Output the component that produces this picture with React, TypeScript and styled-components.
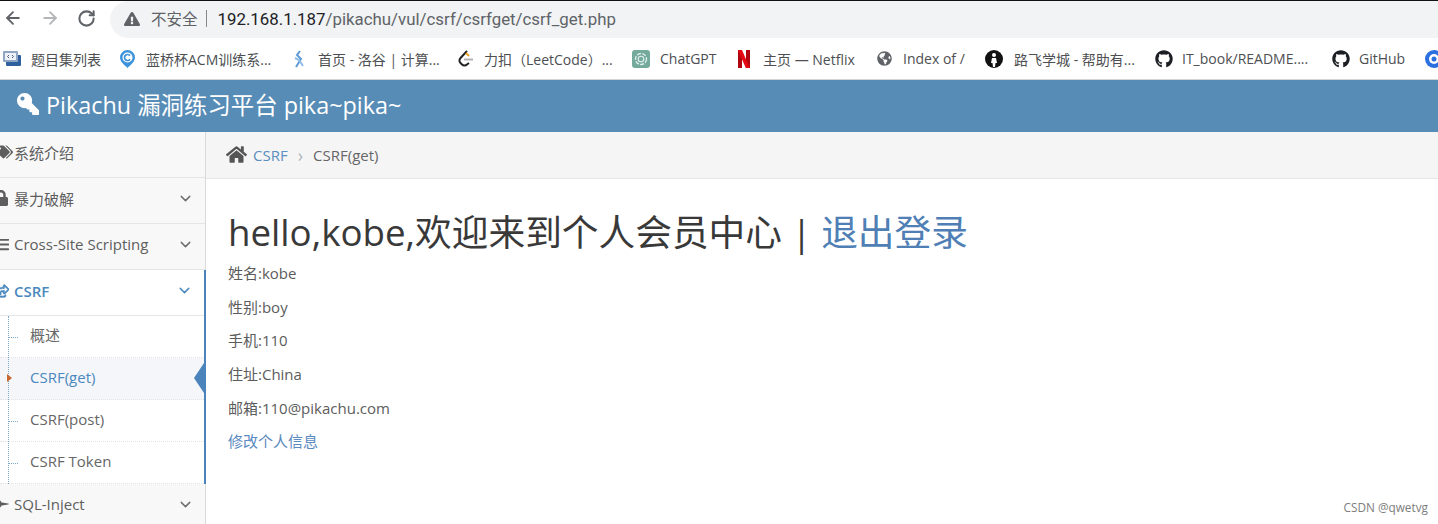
import React, { FC } from 'react'
import styled, { createGlobalStyle } from 'styled-components'
import { ArrowLeft, ArrowRight, RotateCw, ChevronDown } from 'lucide-react'
import {
  FaExclamationTriangle,
  FaFighterJet,
  FaGithub,
  FaGlobeAmericas,
  FaHome,
  FaKey,
  FaListOl,
  FaLock,
  FaRegShareSquare,
  FaTags,
} from 'react-icons/fa'

const GlobalStyle = createGlobalStyle`
  html, body {
    margin: 0;
    padding: 0;
    background: #fff;
  }
  body {
    font-family: "Open Sans", "Noto Sans CJK SC", sans-serif;
    overflow: hidden;
  }
`

function GlobeIcon() {
  return <FaGlobeAmericas size={15} color="#5f6368" />
}

function GithubIcon() {
  return <FaGithub size={18} color="#1b1f23" />
}

const bookmarks: { width: number; text: string; icon: React.ReactNode; gap: number }[] = [
  {
    width: 117,
    gap: 10,
    text: '题目集列表',
    icon: (
      <svg width="18" height="18" viewBox="0 0 18 18">
        <rect x="3" y="5" width="15" height="11" rx="1" fill="#2f5f9e" />
        <rect x="0" y="1" width="15" height="11" rx="1" fill="#8fa6c4" />
        <rect x="2" y="3" width="11" height="7" fill="#eef2f7" />
        <path d="M6 5L4.500 6.500 6 8M9 5l1.500 1.500L9 8" stroke="#44618c" strokeWidth="1" fill="none" />
      </svg>
    ),
  },
  {
    width: 173,
    gap: 11,
    text: '蓝桥杯ACM训练系...',
    icon: (
      <svg width="15" height="18" viewBox="0 0 15 18">
        <path d="M7.500 0a7.500 7.500 0 0 1 7.500 7.500c0 4.500-4.500 7.500-7.500 10.500C4.500 15 0 12 0 7.500A7.500 7.500 0 0 1 7.500 0z" fill="#3d94dc" />
        <circle cx="7.500" cy="7.500" r="5" fill="#fff" />
        <path d="M10 5.800a3 3 0 1 0 0 3.400" stroke="#3d94dc" strokeWidth="1.700" fill="none" />
      </svg>
    ),
  },
  {
    width: 165,
    gap: 13,
    text: '首页 - 洛谷 | 计算...',
    icon: (
      <svg width="12" height="18" viewBox="0 0 12 18">
        <path d="M7 1L4 5l4 4-5 8" stroke="#5d9ad6" strokeWidth="2" fill="none" />
        <path d="M2 8l4 2 4 6" stroke="#8dbce8" strokeWidth="2" fill="none" />
      </svg>
    ),
  },
  {
    width: 174,
    gap: 11,
    text: '力扣（LeetCode）...',
    icon: (
      <svg width="15" height="18" viewBox="0 0 15 18">
        <path d="M9 1L2.500 8a3.500 3.500 0 0 0 0 5l1.500 1.500a3.500 3.500 0 0 0 5 0L11 13" stroke="#222" strokeWidth="2" fill="none" />
        <path d="M6 9.500h9" stroke="#b3b3b3" strokeWidth="2" />
        <path d="M8 3l3 3" stroke="#f0a020" strokeWidth="2" fill="none" />
      </svg>
    ),
  },
  {
    width: 106,
    gap: 10,
    text: 'ChatGPT',
    icon: (
      <svg width="18" height="18" viewBox="0 0 18 18">
        <rect width="18" height="18" rx="3" fill="#74aa9c" />
        <circle cx="9" cy="9" r="5.500" stroke="#e4f0ec" strokeWidth="1.300" fill="none" strokeDasharray="4 1.300" />
        <circle cx="9" cy="9" r="2.800" stroke="#e4f0ec" strokeWidth="1.100" fill="none" />
      </svg>
    ),
  },
  {
    width: 139,
    gap: 13,
    text: '主页 — Netflix',
    icon: (
      <svg width="12" height="18" viewBox="0 0 12 18">
        <path d="M0 0h4v18l-4 .5zM8 0h4v18.500H8z" fill="#b1060f" />
        <path d="M0 0h4l8 18.500H8z" fill="#e50914" />
      </svg>
    ),
  },
  {
    width: 108,
    gap: 11,
    text: 'Index of /',
    icon: <GlobeIcon />,
  },
  {
    width: 170,
    gap: 11,
    text: '路飞学城 - 帮助有...',
    icon: (
      <svg width="18" height="18" viewBox="0 0 18 18">
        <circle cx="9" cy="9" r="9" fill="#111" />
        <circle cx="9" cy="5" r="2" fill="#fff" />
        <path d="M7 8h4l1 5h-1.500L10 17H8l-.5-4H6z" fill="#fff" />
      </svg>
    ),
  },
  {
    width: 177,
    gap: 9,
    text: 'IT_book/README....',
    icon: <GithubIcon />,
  },
  {
    width: 93,
    gap: 9,
    text: 'GitHub',
    icon: <GithubIcon />,
  },
  {
    width: 30,
    gap: 0,
    text: '',
    icon: (
      <svg width="18" height="18" viewBox="0 0 18 18">
        <circle cx="9" cy="9" r="9" fill="#2b6fe0" />
        <circle cx="9" cy="9" r="5" fill="#fff" />
        <circle cx="9" cy="9" r="2.500" fill="#2b6fe0" />
      </svg>
    ),
  },
]

const subItems = ['概述', 'CSRF(get)', 'CSRF(post)', 'CSRF Token']

const profile = ['姓名:kobe', '性别:boy', '手机:110', '住址:China', '邮箱:110@pikachu.com']

const App: FC = () => {
  return (
    <Page>
      <GlobalStyle />
      <Toolbar>
        <NavButtons>
          <ArrowLeft size={20} color="#5f6368" strokeWidth={2.2} />
          <ArrowRight size={20} color="#b4b6b9" strokeWidth={2.2} />
          <RotateCw size={19} color="#5f6368" strokeWidth={2.6} />
        </NavButtons>
        <AddressBar>
          <FaExclamationTriangle size={16} color="#5f6368" />
          <Insecure>不安全</Insecure>
          <AddressDivider />
          <Url>
            <strong>192.168.1.187</strong>/pikachu/vul/csrf/csrfget/csrf_get.php
          </Url>
        </AddressBar>
      </Toolbar>

      <BookmarkBar>
        {bookmarks.map((b, i) => (
          <Bookmark key={i} $width={b.width} $gap={b.gap}>
            {b.icon}
            {b.text && <span>{b.text}</span>}
          </Bookmark>
        ))}
      </BookmarkBar>

      <Header>
        <KeyIcon />
        <span>Pikachu 漏洞练习平台 pika~pika~</span>
      </Header>

      <Body>
        <Sidebar>
          <MenuItem>
            <MenuIcon $inset={1}><FaTags size={16} /></MenuIcon>
            <span>系统介绍</span>
          </MenuItem>
          <MenuItem>
            <MenuIcon $inset={5}><FaLock size={16} /></MenuIcon>
            <span>暴力破解</span>
            <Chevron><ChevronDown size={17} /></Chevron>
          </MenuItem>
          <MenuItem>
            <MenuIcon $inset={5}><FaListOl size={15} /></MenuIcon>
            <span>Cross-Site Scripting</span>
            <Chevron><ChevronDown size={17} /></Chevron>
          </MenuItem>
          <OpenSection>
            <MenuItem $open>
              <MenuIcon $inset={5}><BoldShare size={14} /></MenuIcon>
              <span>CSRF</span>
              <Chevron $open><ChevronDown size={17} /></Chevron>
            </MenuItem>
            <SubMenu>
              {subItems.map((label, i) => (
                <SubItem key={label} $active={i === 1}>
                  {label}
                </SubItem>
              ))}
            </SubMenu>
          </OpenSection>
          <MenuItem>
            <MenuIcon $inset={5}><FaFighterJet size={16} /></MenuIcon>
            <span>SQL-Inject</span>
            <Chevron><ChevronDown size={17} /></Chevron>
          </MenuItem>
        </Sidebar>

        <Main>
          <Breadcrumb>
            <FaHome size={21} color="#555" />
            <CrumbLink>CSRF</CrumbLink>
            <CrumbArrow>›</CrumbArrow>
            <span>CSRF(get)</span>
          </Breadcrumb>
          <Content>
            <Title>
              hello,kobe,欢迎来到个人会员中心 | <a>退出登录</a>
            </Title>
            {profile.map((line) => (
              <InfoLine key={line}>{line}</InfoLine>
            ))}
            <EditLink>修改个人信息</EditLink>
          </Content>
        </Main>
      </Body>

      <Watermark>CSDN @qwetvg</Watermark>
    </Page>
  )
}

export default App

const KeyIcon = styled(FaKey)`
  width: 22px;
  height: 22px;
  color: #fff;
  transform: scaleX(-1);
`

const BoldShare = styled(FaRegShareSquare)`
  stroke: currentColor;
  stroke-width: 30;
`

const Page = styled.div`
  position: relative;
  width: 1438px;
  height: 524px;
  overflow: hidden;
  display: flex;
  flex-direction: column;
  border-top: 1px solid #111;
  box-sizing: border-box;
`

const Toolbar = styled.div`
  height: 37px;
  flex: none;
  display: flex;
  align-items: stretch;
  background: #fff;
`

const NavButtons = styled.div`
  width: 110px;
  flex: none;
  display: flex;
  align-items: center;
  gap: 17px;
  padding: 0 0 3px 3px;
  box-sizing: border-box;
`

const AddressBar = styled.div`
  flex: 1;
  padding: 0 0 2px 14px;
  display: flex;
  align-items: center;
  background: #f1f3f4;
  border-radius: 19px 0 0 19px;
`

const Insecure = styled.span`
  margin-left: 11px;
  color: #5f6368;
  font-size: 15.500px;
`

const AddressDivider = styled.i`
  width: 1px;
  height: 17px;
  margin: 0 11px 0 8px;
  background: #888;
`

const Url = styled.span`
  color: #5f6368;
  font-family: Roboto, sans-serif;
  font-size: 16.850px;
  strong {
    color: #202124;
    font-weight: 400;
  }
`

const BookmarkBar = styled.div`
  height: 41px;
  flex: none;
  display: flex;
  align-items: center;
  padding-left: 3px;
  background: #fff;
  border-bottom: 1px solid #d3d5d7;
`

const Bookmark = styled.div<{ $width: number; $gap: number }>`
  width: ${(p) => p.$width}px;
  flex: none;
  display: flex;
  align-items: center;
  gap: ${(p) => p.$gap}px;
  color: #4d4f52;
  font-size: 14px;
  white-space: nowrap;
  svg {
    flex: none;
  }
`

const Header = styled.div`
  height: 52px;
  flex: none;
  box-sizing: border-box;
  display: flex;
  align-items: center;
  gap: 7px;
  padding: 0 0 4px 17px;
  background: #578cb6;
  color: #fff;
  font-size: 23.400px;
  white-space: nowrap;
`

const Body = styled.div`
  flex: 1;
  display: flex;
  min-height: 0;
`

const Sidebar = styled.aside`
  width: 206px;
  flex: none;
  box-sizing: border-box;
  background: #f8f8f8;
  border-right: 1px solid #d9d9d9;
`

const MenuItem = styled.div<{ $open?: boolean }>`
  height: 46px;
  box-sizing: border-box;
  display: flex;
  align-items: center;
  padding: 0 11px ${(p) => (p.$open ? 4 : 5)}px 0;
  background: ${(p) => (p.$open ? '#fff' : '#f8f8f8')};
  border-bottom: 1px solid #e5e5e5;
  color: ${(p) => (p.$open ? '#4b88bd' : '#5e5e5e')};
  font-size: 15px;
  font-weight: ${(p) => (p.$open ? 600 : 400)};
  white-space: nowrap;
`

const MenuIcon = styled.span<{ $inset: number }>`
  width: 14px;
  flex: none;
  box-sizing: border-box;
  display: flex;
  justify-content: flex-end;
  padding-right: ${(p) => p.$inset}px;
  overflow: hidden;
  svg {
    flex: none;
  }
`

const Chevron = styled.span<{ $open?: boolean }>`
  margin-left: auto;
  display: flex;
  color: ${(p) => (p.$open ? '#4b88bd' : '#6f6f6f')};
`

const OpenSection = styled.div`
  margin-right: -1px;
  border-right: 2px solid #4b83bb;
  background: #fff;
`

const SubMenu = styled.ul`
  position: relative;
  list-style: none;
  margin: 0;
  padding: 0;
  &::before {
    content: '';
    position: absolute;
    z-index: 1;
    left: 8px;
    top: 0;
    bottom: 0;
    border-left: 1px dotted #7ea9cc;
  }
`

const SubItem = styled.li<{ $active?: boolean }>`
  position: relative;
  height: 42px;
  box-sizing: border-box;
  display: flex;
  align-items: center;
  padding: 0 0 4px 30px;
  font-size: 15px;
  color: ${(p) => (p.$active ? '#4b88bd' : '#666')};
  background: ${(p) => (p.$active ? '#f4f6fa' : '#fff')};
  border-bottom: 1px dotted #e3e3e3;
  &::before {
    content: '';
    position: absolute;
    left: 9px;
    top: 50%;
    width: 9px;
    border-top: 1px dotted #7ea9cc;
  }
  ${(p) =>
    p.$active &&
    `
    &::before {
      z-index: 2;
      left: 7px;
      top: 16px;
      width: 0;
      border-top: 4px solid transparent;
      border-bottom: 4px solid transparent;
      border-left: 5px solid #c8682c;
    }
    &::after {
      content: '';
      position: absolute;
      right: 0;
      top: 5px;
      border-top: 15px solid transparent;
      border-bottom: 15px solid transparent;
      border-right: 10px solid #4b83bb;
    }
  `}
`

const Main = styled.main`
  flex: 1;
  min-width: 0;
`

const Breadcrumb = styled.div`
  height: 47px;
  box-sizing: border-box;
  display: flex;
  align-items: center;
  padding: 0 0 1px 20px;
  background: #f5f5f5;
  border-bottom: 1px solid #e5e5e5;
  color: #666;
  font-size: 15px;
`

const CrumbLink = styled.span`
  margin-left: 6px;
  color: #5a8fc0;
`

const CrumbArrow = styled.span`
  margin: 0 10px;
  color: #b2b6bf;
  font-size: 18px;
  line-height: 1;
`

const Content = styled.div`
  padding: 28px 0 0 22px;
`

const Title = styled.h1`
  margin: 0 0 4px;
  color: #393939;
  font-size: 36.700px;
  font-weight: 400;
  line-height: 50px;
  white-space: nowrap;
  a {
    color: #4f7fb5;
  }
`

const InfoLine = styled.p`
  margin: 0;
  height: 33.700px;
  line-height: 24px;
  color: #5c5c5c;
  font-size: 15px;
`

const EditLink = styled.a`
  display: block;
  line-height: 24px;
  color: #5a8abf;
  font-size: 15px;
`

const Watermark = styled.div`
  position: absolute;
  right: 10px;
  bottom: 9px;
  color: #7d7d7d;
  font-size: 11.800px;
`
